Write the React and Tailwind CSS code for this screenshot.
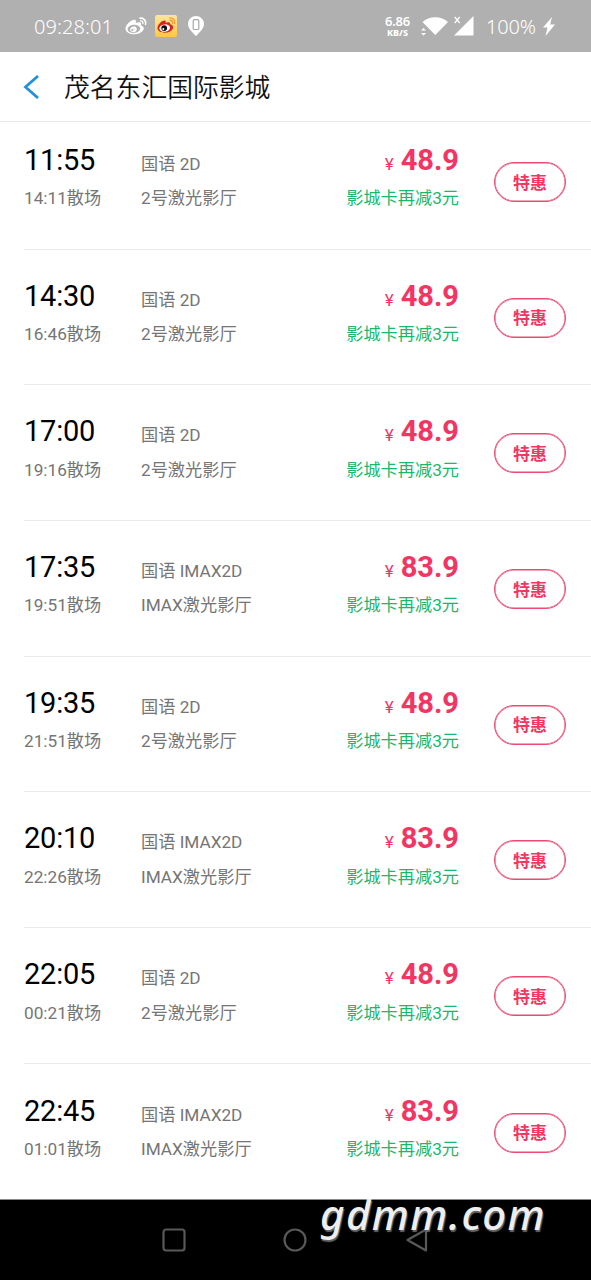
import { FaWeibo } from "react-icons/fa";

const SHOWS = [
  { start: "11:55", end: "14:11", format: "国语 2D", hall: "2号激光影厅", price: "48.9" },
  { start: "14:30", end: "16:46", format: "国语 2D", hall: "2号激光影厅", price: "48.9" },
  { start: "17:00", end: "19:16", format: "国语 2D", hall: "2号激光影厅", price: "48.9" },
  { start: "17:35", end: "19:51", format: "国语 IMAX2D", hall: "IMAX激光影厅", price: "83.9" },
  { start: "19:35", end: "21:51", format: "国语 2D", hall: "2号激光影厅", price: "48.9" },
  { start: "20:10", end: "22:26", format: "国语 IMAX2D", hall: "IMAX激光影厅", price: "83.9" },
  { start: "22:05", end: "00:21", format: "国语 2D", hall: "2号激光影厅", price: "48.9" },
  { start: "22:45", end: "01:01", format: "国语 IMAX2D", hall: "IMAX激光影厅", price: "83.9" },
];

function WeiboAppIcon() {
  return (
    <svg viewBox="0 0 22 22" className="ml-[8px] h-[22px] w-[22px]">
      <defs>
        <linearGradient id="weibo-tile" x1="0" y1="0" x2="0" y2="1">
          <stop offset="0" stopColor="#fbe7a0" />
          <stop offset="1" stopColor="#fbc83f" />
        </linearGradient>
      </defs>
      <rect width="22" height="22" rx="2" fill="url(#weibo-tile)" />
      <path
        d="M2.5 13c0-3 4.4-7.800 7.200-7.400 1.200.2 1.200 1.500 1 2.200 2-.8 4.700-.9 4.500 1.400 2.200.6 3.300 1.800 2.800 3.800-.7 3-4.200 4.700-8.300 4.700S2.500 16 2.500 13z"
        fill="#d8231f"
      />
      <ellipse cx="9.700" cy="13.100" rx="5.400" ry="3.700" fill="#fff" transform="rotate(-8 9.700 13.100)" />
      <circle cx="9.200" cy="13.100" r="2.900" fill="#161010" />
      <circle cx="8.300" cy="13.900" r="1" fill="#fff" />
      <path d="M14.500 5.300c2.300-.3 3.800 1.500 3.200 3.700M14.300 2.900c4-.5 6.300 2.600 5.400 6.300" fill="none" stroke="#f29a38" strokeWidth="1.300" />
    </svg>
  );
}

function StatusBar() {
  return (
    <div className="flex h-[52px] shrink-0 items-center bg-[#b0b0b0] pl-[34px] font-['Noto_Sans',sans-serif] text-white">
      <span className="w-[80px] pt-[2px] text-[20px] font-[350] tracking-[0.1px]">09:28:01</span>
      <FaWeibo className="ml-[11px] h-[21px] w-[22px]" />
      <WeiboAppIcon />
      <svg viewBox="0 0 16 20" className="ml-[11px] h-[20px] w-[16px]">
        <path d="M8 0a8 8 0 0 1 8 8c0 4.500-4.500 8.500-8 12C4.500 16.500 0 12.500 0 8a8 8 0 0 1 8-8z" fill="#fff" />
        <rect x="5.200" y="3.700" width="5.600" height="9.800" rx="1" fill="none" stroke="#a8a8a8" strokeWidth="1.200" />
      </svg>

      <div className="ml-auto flex flex-col items-center">
        <span className="text-[13px] font-semibold leading-[12px] tracking-[-0.2px]">6.86</span>
        <span className="mt-[1px] text-[9px] font-extrabold leading-[9px]">KB/S</span>
      </div>
      <svg viewBox="0 0 27 20" className="ml-[11px] h-[20px] w-[27px]" fill="#fff">
        <path d="M1.500 6C8-.5 20.500-.5 27 6L14.300 19z" />
        <path d="M0 14.500 2.500 12 5 14.500zM0 17h5l-2.500 2.500z" />
      </svg>
      <svg viewBox="0 0 20 20" className="ml-[6px] h-[20px] w-[20px]" fill="#fff">
        <path d="M19.500 0v19.500H0z" />
        <path d="M.7 1l5 6M5.700 1l-5 6" stroke="#fff" strokeWidth="1.300" />
      </svg>
      <span className="ml-[12px] w-[51px] pt-[2px] text-[20px] font-[350] tracking-[-0.2px]">100%</span>
      <svg viewBox="0 0 12 19" className="ml-[6px] mr-[36px] h-[19px] w-[12px]" fill="#fff">
        <path d="M9 0 0 10.500h4.500L2.500 19 12 7.500H7.200z" />
      </svg>
    </div>
  );
}

function ShowRow({ show }) {
  return (
    <li className="ml-6 flex h-[135.7px] items-end border-b border-[#ebebeb] pb-[38.3px] first:h-[127.7px] last:border-b-0">
      <div className="w-[117px]">
        <p className="text-[29px] leading-[34px] tracking-[-0.2px] text-black">{show.start}</p>
        <p className="mt-[9.5px] text-[17.2px] leading-[24px] text-[#757575]">{show.end}散场</p>
      </div>
      <div className="text-[17.2px] leading-[24px] text-[#757575]">
        <p>{show.format}</p>
        <p className="mt-[10.5px]">{show.hall}</p>
      </div>
      <div className="ml-auto text-right">
        <p className="flex items-baseline justify-end leading-[34px] text-[#f23562]">
          <span className="mr-[7px] text-[17px]">¥</span>
          <span className="text-[29px] font-bold">{show.price}</span>
        </p>
        <p className="mt-[5.5px] text-[17.2px] leading-[24px] text-[#19b86d]">影城卡再减3元</p>
      </div>
      <button className="mb-[8.5px] ml-[35px] mr-[25px] h-[40px] w-[72px] rounded-full border border-[#ea4a72] pt-[3px] text-[17px] font-bold text-[#f23562] shadow-[inset_0_0_0_0.5px_#ea4a72]">
        特惠
      </button>
    </li>
  );
}

function NavBar() {
  return (
    <div className="relative flex h-[81px] shrink-0 items-center border-t border-[#888] bg-black pl-[162px]">
      <svg viewBox="0 0 24 24" className="h-[24px] w-[24px]" fill="none" stroke="#595959" strokeWidth="2.200">
        <rect x="1.500" y="1.500" width="21" height="21" rx="2.500" />
      </svg>
      <svg viewBox="0 0 24 24" className="ml-[97px] h-[24px] w-[24px]" fill="none" stroke="#595959" strokeWidth="2.200">
        <circle cx="12" cy="12" r="10.500" />
      </svg>
      <svg viewBox="0 0 22 24" className="ml-[99px] h-[24px] w-[22px]" fill="none" stroke="#595959" strokeWidth="2.200" strokeLinejoin="round">
        <path d="M20 1.500v21L1.500 12z" />
      </svg>
      <span className="absolute left-[320px] top-[-12px] font-['Noto_Sans',sans-serif] text-[42px] font-medium italic leading-[52px] tracking-[1.4px] text-[#eee] [text-shadow:1px_2px_1px_#666]">
        gdmm.com
      </span>
    </div>
  );
}

export default function App() {
  return (
    <div className="flex h-[1280px] w-[591px] flex-col overflow-hidden bg-white font-[Roboto,'Noto_Sans_CJK_SC',sans-serif]">
      <StatusBar />
      <header className="flex h-[70px] shrink-0 items-center border-b border-[#e8e8e8] pl-[23px]">
        <svg viewBox="0 0 17 24" className="h-[24px] w-[17px]" fill="none" stroke="#258fd8" strokeWidth="2.800">
          <path d="M15 1 2.500 12 15 23" />
        </svg>
        <h1 className="ml-[24px] pt-[2px] text-[25.8px] font-[350] leading-[36px] text-[#111]">茂名东汇国际影城</h1>
      </header>
      <ul className="min-h-0 flex-1">
        {SHOWS.map((show) => (
          <ShowRow key={show.start} show={show} />
        ))}
      </ul>
      <NavBar />
    </div>
  );
}
